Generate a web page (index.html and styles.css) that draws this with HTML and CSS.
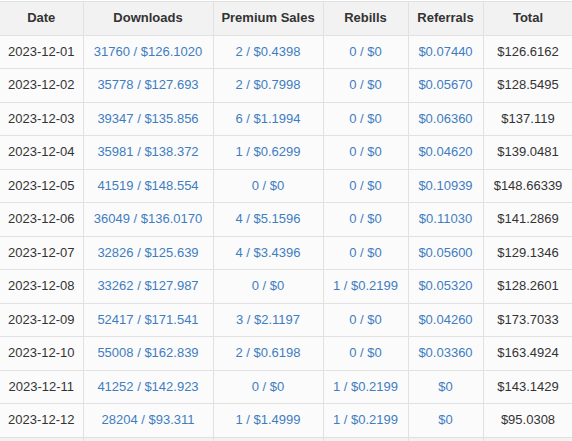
FILE: index.html
```html
<!DOCTYPE html>
<html>
<head>
<meta charset="utf-8">
<link rel="stylesheet" href="styles.css">
</head>
<body>
<table class="stats">
  <colgroup>
    <col class="c-date"><col class="c-dl"><col class="c-prem"><col class="c-reb"><col class="c-ref"><col class="c-total">
  </colgroup>
  <thead>
    <tr><th>Date</th><th>Downloads</th><th>Premium Sales</th><th>Rebills</th><th>Referrals</th><th>Total</th></tr>
  </thead>
  <tbody>
    <tr><td>2023-12-01</td><td class="link">31760 / $126.1020</td><td class="link">2 / $0.4398</td><td class="link">0 / $0</td><td class="link">$0.07440</td><td>$126.6162</td></tr>
    <tr><td>2023-12-02</td><td class="link">35778 / $127.693</td><td class="link">2 / $0.7998</td><td class="link">0 / $0</td><td class="link">$0.05670</td><td>$128.5495</td></tr>
    <tr><td>2023-12-03</td><td class="link">39347 / $135.856</td><td class="link">6 / $1.1994</td><td class="link">0 / $0</td><td class="link">$0.06360</td><td>$137.119</td></tr>
    <tr><td>2023-12-04</td><td class="link">35981 / $138.372</td><td class="link">1 / $0.6299</td><td class="link">0 / $0</td><td class="link">$0.04620</td><td>$139.0481</td></tr>
    <tr><td>2023-12-05</td><td class="link">41519 / $148.554</td><td class="link">0 / $0</td><td class="link">0 / $0</td><td class="link">$0.10939</td><td>$148.66339</td></tr>
    <tr><td>2023-12-06</td><td class="link">36049 / $136.0170</td><td class="link">4 / $5.1596</td><td class="link">0 / $0</td><td class="link">$0.11030</td><td>$141.2869</td></tr>
    <tr><td>2023-12-07</td><td class="link">32826 / $125.639</td><td class="link">4 / $3.4396</td><td class="link">0 / $0</td><td class="link">$0.05600</td><td>$129.1346</td></tr>
    <tr><td>2023-12-08</td><td class="link">33262 / $127.987</td><td class="link">0 / $0</td><td class="link">1 / $0.2199</td><td class="link">$0.05320</td><td>$128.2601</td></tr>
    <tr><td>2023-12-09</td><td class="link">52417 / $171.541</td><td class="link">3 / $2.1197</td><td class="link">0 / $0</td><td class="link">$0.04260</td><td>$173.7033</td></tr>
    <tr><td>2023-12-10</td><td class="link">55008 / $162.839</td><td class="link">2 / $0.6198</td><td class="link">0 / $0</td><td class="link">$0.03360</td><td>$163.4924</td></tr>
    <tr><td>2023-12-11</td><td class="link">41252 / $142.923</td><td class="link">0 / $0</td><td class="link">1 / $0.2199</td><td class="link">$0</td><td>$143.1429</td></tr>
    <tr><td>2023-12-12</td><td class="link">28204 / $93.311</td><td class="link">1 / $1.4999</td><td class="link">1 / $0.2199</td><td class="link">$0</td><td>$95.0308</td></tr>
  </tbody>
  <tfoot>
    <tr><td>&nbsp;</td><td>&nbsp;</td><td>&nbsp;</td><td>&nbsp;</td><td>&nbsp;</td><td>&nbsp;</td></tr>
  </tfoot>
</table>
</body>
</html>
```
FILE: styles.css
```css
html, body {
  margin: 0;
  padding: 0;
  background: #ffffff;
  overflow: hidden;
}
body {
  padding-top: 1px;
  font-family: "Liberation Sans", Arial, sans-serif;
  font-size: 13px;
  color: #333333;
}
.stats {
  border-collapse: collapse;
  table-layout: fixed;
  width: 573px;
}
.c-date { width: 83px; }
.c-dl { width: 130px; }
.c-prem { width: 110px; }
.c-reb { width: 85px; }
.c-ref { width: 75px; }
.c-total { width: 90px; }
.stats th,
.stats td {
  border: 1px solid #e1e1e1;
  padding: 7px 2px;
  line-height: 18.5px;
  text-align: center;
  white-space: nowrap;
}
.stats tr > :first-child {
  border-left: none;
}
.stats th {
  background: #f2f2f2;
  font-weight: bold;
  color: #333333;
}
.stats td {
  background: #fbfbfb;
}
.stats td.link {
  color: #3f7dc1;
}
.stats tfoot td {
  background: #f2f2f2;
}
```
